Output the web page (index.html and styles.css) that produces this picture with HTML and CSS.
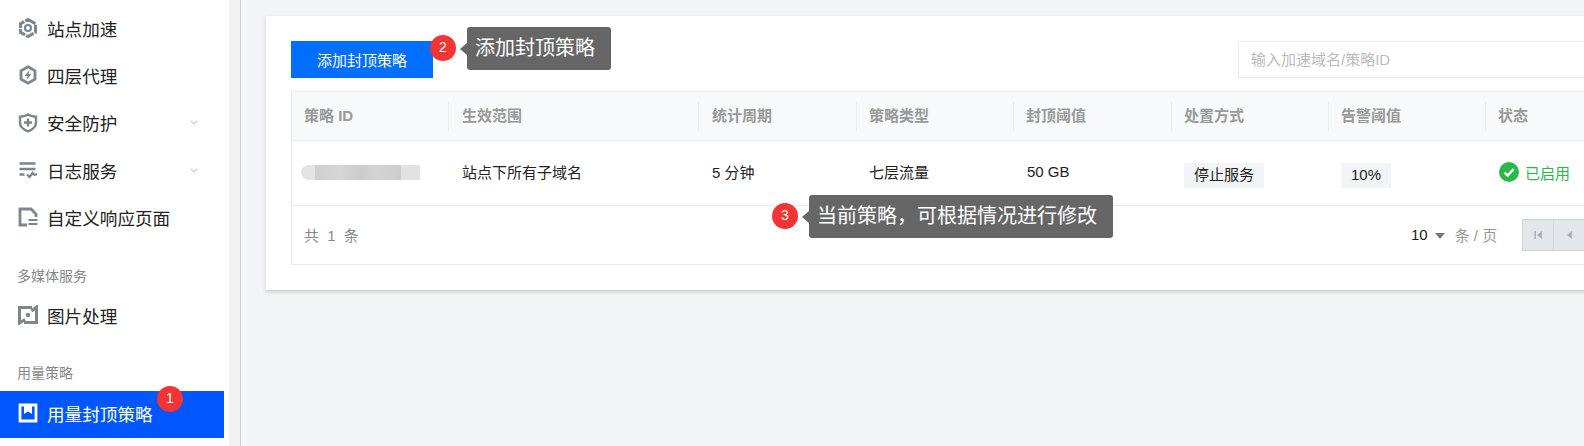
FILE: index.html
```html
<!DOCTYPE html>
<html lang="zh-CN">
<head>
<meta charset="utf-8">
<title>用量封顶策略</title>
<link rel="stylesheet" href="styles.css">
</head>
<body>
<div class="page">
  <nav class="sidebar">
    <a class="item">
      <svg class="ico" viewBox="0 0 20 20"><path d="M10 1.500l7.500 4.200v8.600L10 18.500l-7.500-4.200V5.700z" fill="none" stroke="#7d868c" stroke-width="3" stroke-dasharray="8.500 1.200"/><circle cx="10" cy="10" r="3" fill="none" stroke="#7d868c" stroke-width="2.200"/></svg>
      <span>站点加速</span>
    </a>
    <a class="item">
      <svg class="ico" viewBox="0 0 20 20"><path d="M10 1.800l7 4v8.400l-7 4-7-4V5.800z" fill="none" stroke="#7d868c" stroke-width="2.800"/><path d="M11.500 5L6.500 11H9.500L8.500 15l5-6h-3z" fill="#7d868c"/></svg>
      <span>四层代理</span>
    </a>
    <a class="item">
      <svg class="ico" viewBox="0 0 20 20"><path d="M10 1.500c2.500 1.500 5 2.200 8 2.300v6c0 4-3.500 6.800-8 8.500-4.500-1.700-8-4.500-8-8.500v-6c3-.1 5.500-.8 8-2.300z" fill="none" stroke="#7d868c" stroke-width="2.400"/><path d="M10 5.500v8M6 9.500h8" stroke="#7d868c" stroke-width="2.400"/></svg>
      <span>安全防护</span>
      <svg class="chev" viewBox="0 0 10 6"><path d="M1 1l4 3.500L9 1" fill="none" stroke="#c4c7cc" stroke-width="1.500"/></svg>
    </a>
    <a class="item">
      <svg class="ico" viewBox="0 0 20 20"><path d="M1.500 3.500h16M1.500 9h16M1.500 14.500h5" stroke="#7d868c" stroke-width="2.400" fill="none"/><path d="M9 14.500l2.500 2.500 3-4 2 2 2.500-1" stroke="#7d868c" stroke-width="2.200" fill="none"/></svg>
      <span>日志服务</span>
      <svg class="chev" viewBox="0 0 10 6"><path d="M1 1l4 3.500L9 1" fill="none" stroke="#c4c7cc" stroke-width="1.500"/></svg>
    </a>
    <a class="item">
      <svg class="ico" viewBox="0 0 20 20"><path d="M9 18H2V2h11l5 5v3" fill="none" stroke="#7d868c" stroke-width="2.800"/><path d="M10.500 13h9M10.500 17h9" stroke="#7d868c" stroke-width="2.200"/></svg>
      <span>自定义响应页面</span>
    </a>
    <div class="label">多媒体服务</div>
    <a class="item">
      <svg class="ico" viewBox="0 0 20 20"><path d="M14 2.500H1.500V18L7 14.500M6 17.500h12.500V2L13.500 6" fill="none" stroke="#7d868c" stroke-width="3"/><circle cx="10" cy="10" r="2.200" fill="#7d868c"/></svg>
      <span>图片处理</span>
    </a>
    <div class="label label-tight">用量策略</div>
    <a class="item active">
      <svg class="ico" viewBox="0 0 20 20"><path d="M2 2h16v16H2z" fill="none" stroke="#fff" stroke-width="2.800"/><path d="M6 2h8v9l-4-2.500L6 11z" fill="#fff"/></svg>
      <span>用量封顶策略</span>
      <i class="badge badge-one">1</i>
    </a>
  </nav>
  <div class="gutter"></div>
  <main class="main">
    <section class="card">
      <div class="toolbar">
        <button class="primary">添加封顶策略</button>
        <input class="search" placeholder="输入加速域名/策略ID">
      </div>
      <div class="table">
        <div class="row head">
          <div class="cell">策略 ID</div>
          <div class="cell">生效范围</div>
          <div class="cell">统计周期</div>
          <div class="cell">策略类型</div>
          <div class="cell">封顶阈值</div>
          <div class="cell">处置方式</div>
          <div class="cell">告警阈值</div>
          <div class="cell">状态</div>
        </div>
        <div class="row body">
          <div class="cell"><div class="blur"></div></div>
          <div class="cell">站点下所有子域名</div>
          <div class="cell">5 分钟</div>
          <div class="cell">七层流量</div>
          <div class="cell">50 GB</div>
          <div class="cell"><span class="tag">停止服务</span></div>
          <div class="cell"><span class="tag">10%</span></div>
          <div class="cell status">
            <svg class="ok" viewBox="0 0 20 20"><circle cx="10" cy="10" r="10" fill="#29b84a"/><path d="M5.500 10.500l3.200 3 6-6.500" fill="none" stroke="#fff" stroke-width="2.400"/></svg>
            <span>已启用</span>
          </div>
        </div>
        <div class="foot">
          <span class="total">共 1 条</span>
          <div class="pager">
            <span class="size">10</span><i class="caret"></i><span class="unit">条 / 页</span>
            <div class="btns">
              <span class="btn"><svg viewBox="0 0 10 10"><path d="M1.500 1h1.500v8H1.500zM9 1v8L4 5z" fill="#a9b0b8"/></svg></span>
              <span class="btn"><svg viewBox="0 0 10 10"><path d="M8 1v8L3 5z" fill="#a9b0b8"/></svg></span>
              <span class="btn"></span>
            </div>
          </div>
        </div>
      </div>
    </section>
  </main>
  <div class="tip tip-add"><i class="badge tip-badge">2</i>添加封顶策略</div>
  <div class="tip tip-edit"><i class="badge tip-badge">3</i>当前策略，可根据情况进行修改</div>
</div>
</body>
</html>
```
FILE: styles.css
```css
* { box-sizing: border-box; }
html, body { margin: 0; padding: 0; height: 446px; overflow: hidden; }
body { font-family: "Liberation Sans", "Noto Sans CJK SC", sans-serif; color: #222; background: #f2f4f8; }
.page { position: relative; display: flex; width: 1584px; height: 446px; overflow: hidden; }

.sidebar { flex: 0 0 229px; padding-top: 4.5px; background: #fff; }
.item { display: flex; align-items: center; height: 47.3px; padding-left: 18px; margin-right: 5px; font-size: 17.6px; color: #222; position: relative; }
.ico { width: 20px; height: 20px; margin-right: 9px; flex: none; }
.chev { position: absolute; left: 190px; width: 8px; height: 5px; }
.label { height: 20px; margin: 25.5px 0 5px; padding-left: 17px; font-size: 14px; line-height: 20px; color: #888; }
.label-tight { margin-top: 24px; }
.item.active { height: 47px; margin-top: 8px; padding-bottom: 2px; background: #0057ff; color: #fff; }

.gutter { flex: 0 0 12px; background: #f2f2f2; border-right: 1px solid #cdcfd6; }

.main { flex: 1; padding: 16px 0 0 25px; min-width: 0; background: linear-gradient(90deg, #f5f6fa 0, #f5f6fa 6px, #f2f4f8 6px); }
.card { width: 1400px; height: 274px; padding: 25px; background: #fff; box-shadow: 0 2px 4px rgba(0, 0, 0, .16); }
.toolbar { display: flex; justify-content: space-between; height: 37px; margin-bottom: 13px; }
.primary { width: 142px; height: 37px; border: 0; padding: 0; background: #006eff; color: #fff; font: 15px "Liberation Sans", "Noto Sans CJK SC", sans-serif; }
.search { width: 428px; margin-right: -25px; margin-left: auto; height: 37px; padding: 0 12px; border: 1px solid #e8eaee; font: 15px "Liberation Sans", "Noto Sans CJK SC", sans-serif; outline: 0; }
.search::placeholder { color: #bbb; }

.table { border: 1px solid #e8eaee; border-width: 1px 0 1px 1px; height: 174px; }
.row { display: grid; grid-template-columns: 156px 250px 158px 157px 158px 157px 157px 157px; align-items: center; }
.head { height: 49px; background: #f8f9fb; border-bottom: 1px solid #e8eaee; color: #999; font-size: 15px; font-weight: bold; }
.head .cell { height: 29px; line-height: 27px; border-left: 1px solid #eceef2; padding-left: 12px; }
.head .cell:first-child { border-left: 0; padding-left: 12px; }
.head .cell:nth-child(2), .head .cell:nth-child(3) { padding-left: 13px; }
.body { height: 65px; padding-bottom: 3px; border-bottom: 1px solid #e8eaee; font-size: 15px; }
.cell { padding-left: 13px; white-space: nowrap; }
.body .cell:nth-child(2), .body .cell:nth-child(3), .body .cell:nth-child(5) { padding-left: 14px; }
.blur { width: 119px; height: 15px; margin: 1px 0 0 -4px; border-radius: 8px 0 0 8px; background: linear-gradient(90deg, #e4e4e4 0, #e4e4e4 14px, #cfcfcf 14px, #d6d6d6 40px, #cbcbcb 60px, #d4d4d4 75px, #cdcdcd 100px, #e2e2e2 100px, #e2e2e2 100%); }
.tag { display: inline-block; height: 25px; margin-top: 7px; padding: 0 10px; line-height: 24px; background: #f2f4f8; color: #222; }
.status { display: flex; align-items: center; color: #29b84a; margin-top: 1px; padding-left: 14px; }
.ok { width: 20px; height: 20px; margin-right: 6px; flex: none; }

.foot { display: flex; align-items: center; justify-content: space-between; height: 57px; padding-left: 12px; font-size: 15px; }
.total { color: #888; letter-spacing: 2px; }
.pager { display: flex; align-items: center; margin-right: 1px; width: 229px; }
.size { font-size: 15px; color: #222; }
.caret { width: 0; height: 0; margin: 3px 10px 0 7px; border: 5px solid transparent; border-top: 6px solid #777; border-bottom: 0; }
.unit { color: #999; white-space: nowrap; }
.btns { display: flex; flex: none; margin-left: 25px; }
.btn { display: flex; flex: none; align-items: center; justify-content: center; width: 31px; height: 32px; background: #e3e6eb; border: 1px solid #cfd4db; border-right: 0; }
.btn svg { width: 10px; height: 10px; }

.badge { display: block; width: 26px; height: 26px; border-radius: 50%; background: #f23434; color: #fff; font-style: normal; font-size: 14px; line-height: 24px; text-align: center; }
.badge-one { position: absolute; left: 157px; top: -5px; }

.tip { position: absolute; height: 43px; padding: 0 16px 0 8px; background: #666; color: #fff; font-size: 20px; line-height: 43px; border-radius: 3px; white-space: nowrap; }
.tip::before { content: ""; position: absolute; left: -7px; top: 16px; border: 6px solid transparent; border-left: 0; border-right: 7px solid #666; }
.tip-badge { position: absolute; left: -37px; top: 8px; }
.tip-add { left: 467px; top: 27px; }
.tip-edit { left: 809px; top: 195px; }
```
